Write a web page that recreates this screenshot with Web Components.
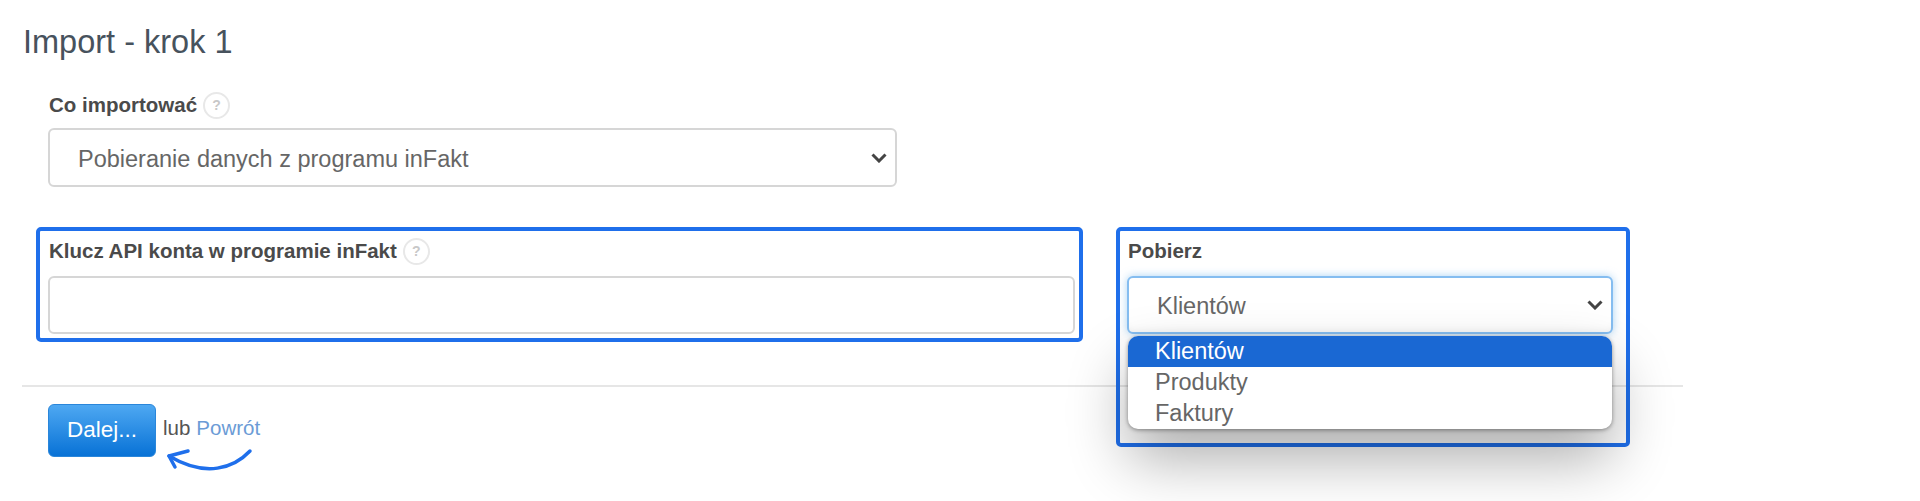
<!DOCTYPE html>
<html lang="pl">
<head>
<meta charset="utf-8">
<title>Import - krok 1</title>
<style>
  html, body { margin: 0; background: #fff; }
  body { font-family: "Liberation Sans", Arial, sans-serif; color: #555; overflow: hidden; height: 501px; }
</style>
</head>
<body>
<import-page>
  <span slot="title">Import - krok 1</span>

  <form-field slot="first" help>
    <span slot="label">Co importować</span>
    <select-box>Pobieranie danych z programu inFakt</select-box>
  </form-field>

  <marked-box slot="left">
    <form-field help>
      <span slot="label">Klucz API konta w programie inFakt</span>
      <text-box></text-box>
    </form-field>
  </marked-box>

  <marked-box slot="right" class="wide">
    <form-field>
      <span slot="label">Pobierz</span>
      <select-box focused>Klientów</select-box>
      <option-list>
        <span>Klientów</span>
        <span>Produkty</span>
        <span>Faktury</span>
      </option-list>
    </form-field>
  </marked-box>

  <form-actions slot="actions"></form-actions>
</import-page>

<script>
class ImportPage extends HTMLElement {
  constructor() {
    super();
    this.attachShadow({ mode: 'open' });
    this.shadowRoot.innerHTML = `
      <style>
        :host { display: block; width: 1661px; margin-left: 22px; }
        h1 {
          margin: 0; padding: 24px 0 0 1px;
          font: 400 32.5px/36px "Liberation Sans", Arial, sans-serif; color: #47525d;
        }
        .first { padding: 32px 0 0 26px; width: 849px; }
        .row {
          display: grid; grid-template-columns: 1047px 514px; column-gap: 33px;
          align-items: start; height: 158px; padding: 40px 0 0 14px;
        }
        hr { margin: 0; border: 0; height: 2px; background: #e6e6e6; }
        .actions { padding: 17px 0 0 26px; }
      </style>
      <h1><slot name="title"></slot></h1>
      <div class="first"><slot name="first"></slot></div>
      <div class="row"><slot name="left"></slot><slot name="right"></slot></div>
      <hr>
      <div class="actions"><slot name="actions"></slot></div>
    `;
  }
}

class MarkedBox extends HTMLElement {
  constructor() {
    super();
    this.attachShadow({ mode: 'open' });
    this.shadowRoot.innerHTML = `
      <style>
        :host {
          --label-gap: 12px;
          display: block; position: relative; z-index: 2; box-sizing: border-box;
          padding: 7px 4px 4px 8px;
          border: 4px solid #1f6feb; border-radius: 5px;
        }
        :host(.wide) { padding: 7px 13px 14px 7px; }
      </style>
      <slot></slot>
    `;
  }
}

class FormField extends HTMLElement {
  connectedCallback() {
    if (this.shadowRoot) return;
    this.attachShadow({ mode: 'open' });
    const help = this.hasAttribute('help')
      ? '<span class="help">?</span>' : '';
    this.shadowRoot.innerHTML = `
      <style>
        :host { display: block; }
        .label {
          display: flex; align-items: center; gap: 6px; height: 26px; margin-bottom: var(--label-gap, 10px); padding-left: 1px;
          font: 700 20.5px/26px "Liberation Sans", Arial, sans-serif; color: #4a4a4a;
        }
        .help {
          box-sizing: border-box; width: 27px; height: 27px; border: 2px solid #e8e8e8; border-radius: 50%;
          font: 700 14px/23px "Liberation Sans", Arial, sans-serif; color: #c8c8c8; text-align: center;
        }
      </style>
      <div class="label"><slot name="label"></slot>${help}</div>
      <slot></slot>
    `;
  }
}

class SelectBox extends HTMLElement {
  constructor() {
    super();
    this.attachShadow({ mode: 'open' });
    this.shadowRoot.innerHTML = `
      <style>
        :host {
          display: flex; align-items: center; justify-content: space-between; box-sizing: border-box;
          height: 59px; padding: 0 8px 0 28px; background: #fff;
          border: 2px solid #d6d6d6; border-radius: 6px;
          font: 400 23.5px "Liberation Sans", Arial, sans-serif; color: #666;
        }
        :host([focused]) {
          height: 58px; border-color: #85bdf0;
          box-shadow: 0 0 8px rgba(102, 175, 233, .55), inset 0 -8px 10px -8px rgba(0, 0, 0, .08);
        }
        .text { padding-top: 3px; }
        svg { width: 16px; height: 10px; flex: none; }
      </style>
      <span class="text"><slot></slot></span>
      <svg viewBox="0 0 16 10"><path d="M1.5 1.5 8 8l6.500-6.500" fill="none" stroke="#444" stroke-width="3"/></svg>
    `;
  }
}

class TextBox extends HTMLElement {
  constructor() {
    super();
    this.attachShadow({ mode: 'open' });
    this.shadowRoot.innerHTML = `
      <style>
        :host {
          display: block; box-sizing: border-box; height: 58px; background: #fff;
          border: 2px solid #d6d6d6; border-radius: 6px;
        }
      </style>
    `;
  }
}

class OptionList extends HTMLElement {
  constructor() {
    super();
    this.attachShadow({ mode: 'open' });
    this.shadowRoot.innerHTML = `
      <style>
        :host {
          display: flex; flex-direction: column; box-sizing: border-box; height: 93px; margin: 2px 1px 0;
          background: #fff; border-radius: 10px; overflow: hidden;
          font: 400 23.5px/31px "Liberation Sans", Arial, sans-serif; color: #666;
          box-shadow: 0 1px 4px rgba(0, 0, 0, .4), 0 30px 60px rgba(0, 0, 0, .32);
        }
        ::slotted(span) { height: 31px; padding-left: 27px; }
        ::slotted(span:first-child) { background: #1a68d3; color: #fff; }
      </style>
      <slot></slot>
    `;
  }
}

class FormActions extends HTMLElement {
  constructor() {
    super();
    this.attachShadow({ mode: 'open' });
    this.shadowRoot.innerHTML = `
      <style>
        :host {
          display: flex; align-items: center; position: relative; height: 53px;
          font: 400 20.5px "Liberation Sans", Arial, sans-serif; color: #555;
        }
        button {
          box-sizing: border-box; width: 108px; height: 53px; padding: 0 0 2px; margin-right: 7px;
          border: 1px solid #2a86da; border-radius: 6px; color: #fff;
          font: 400 22.5px "Liberation Sans", Arial, sans-serif;
          background: linear-gradient(#4ea8f2, #0872d6);
        }
        .lub { margin-right: 6px; position: relative; top: -3px; }
        a { color: #6b9bd6; text-decoration: none; position: relative; top: -3px; }
        svg { position: absolute; left: 114px; top: 42px; width: 96px; height: 32px; overflow: visible; }
      </style>
      <button type="button">Dalej...</button>
      <span class="lub">lub</span>
      <a href="#">Powrót</a>
      <svg viewBox="0 0 96 32" fill="none" stroke="#1f6feb" stroke-width="3.500" stroke-linecap="round" stroke-linejoin="round">
        <path d="M88 5C72 22 44 32 7 10"/>
        <path d="M26 5 7 10l6 11"/>
      </svg>
    `;
  }
}

customElements.define('import-page', ImportPage);
customElements.define('marked-box', MarkedBox);
customElements.define('form-field', FormField);
customElements.define('select-box', SelectBox);
customElements.define('text-box', TextBox);
customElements.define('option-list', OptionList);
customElements.define('form-actions', FormActions);
</script>
</body>
</html>
